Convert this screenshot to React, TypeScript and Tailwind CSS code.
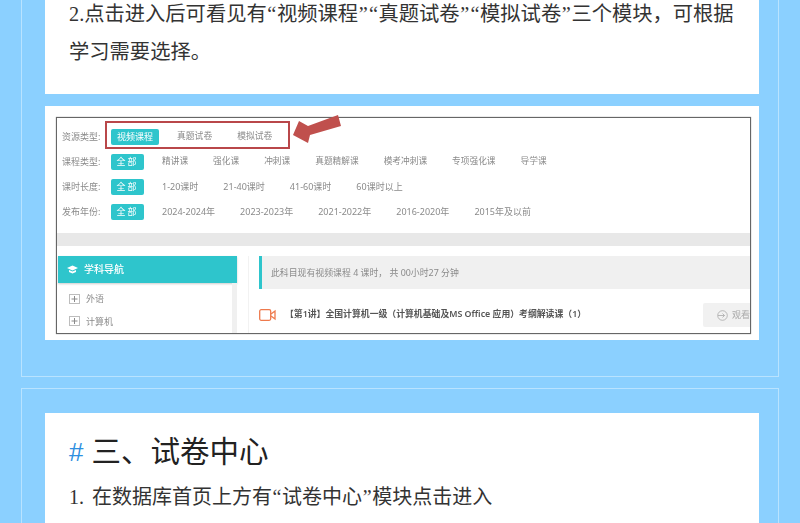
const cjk = "font-['Liberation_Serif','Noto_Sans_CJK_SC',serif]";

function Row({ label, active, items, cls, size }: { label: string; active: string; items: string[]; cls: string; size: string }) {
  return (
    <div className={`flex items-center ${cls}`}>
      <span className="w-[54px] shrink-0 pl-[5px] text-[9px] text-[#8a8a8a]">{label}</span>
      <span className="flex h-[16px] w-[33px] shrink-0 items-center justify-center rounded-[2px] bg-[#2ec5cc] text-[9px] tracking-[2px] text-white">{active}</span>
      <div className="ml-[18px] flex gap-[25px]">
        {items.map((t) => (
          <span key={t} className={`whitespace-nowrap text-[#8a8a8a] ${size}`}>{t}</span>
        ))}
      </div>
    </div>
  );
}

function Plus() {
  return (
    <svg width="11" height="10" viewBox="0 0 11 10" className="shrink-0">
      <rect x="0.5" y="0.5" width="10" height="9" fill="#fff" stroke="#bdbdbd" />
      <path d="M2.5 5H8.5M5.5 2V8" stroke="#8a8a8a" strokeWidth="1" />
    </svg>
  );
}

function Shot() {
  return (
    <div className="relative h-[217px] w-[695px] border border-[#666] bg-white font-['Noto_Sans','Noto_Sans_CJK_SC',sans-serif] shadow-[0_0_1px_#888]">
      <div className="h-full overflow-hidden blur-[0.45px]">
        <div className="flex h-[36px] items-center pt-[1px]">
          <span className="w-[54px] shrink-0 pl-[5px] text-[9px] text-[#8a8a8a]">资源类型:</span>
          <span className="flex h-[16px] w-[48px] shrink-0 items-center justify-center rounded-[2px] bg-[#2ec5cc] text-[9px] text-white">视频课程</span>
          <div className="ml-[18px] flex gap-[25px]">
            <span className="text-[8.8px] text-[#8a8a8a]">真题试卷</span>
            <span className="text-[8.8px] text-[#8a8a8a]">模拟试卷</span>
          </div>
        </div>
        <Row cls="h-[16px]" size="text-[8.7px]" label="课程类型:" active="全部" items={["精讲课", "强化课", "冲刺课", "真题精解课", "模考冲刺课", "专项强化课", "导学课"]} />
        <Row cls="mt-[9px] h-[16px]" size="text-[9px]" label="课时长度:" active="全部" items={["1-20课时", "21-40课时", "41-60课时", "60课时以上"]} />
        <Row cls="mt-[9px] h-[16px]" size="text-[9px]" label="发布年份:" active="全部" items={["2024-2024年", "2023-2023年", "2021-2022年", "2016-2020年", "2015年及以前"]} />
        <div className="mt-[13px] h-[13px] bg-[#e8e8e8]" />
        <div className="mt-[10px] flex">
          <div className="ml-[1px] w-[179px] shrink-0">
            <div className="flex h-[27px] items-center bg-[#2ec5cc] pl-[9px] text-[10px] font-medium text-white shadow-[0_1px_2px_#ccc]">
              <svg width="11" height="9" viewBox="0 0 11 9" className="mr-[6px]">
                <path d="M5.5 0.5L11 3L5.5 5.5L0 3Z" fill="#fff" />
                <path d="M2 5L5.5 6.6L9 5V7L5.5 8.6L2 7Z" fill="#fff" />
              </svg>
              学科导航
            </div>
            <div className="h-[60px] border-r-[5px] border-r-[#f0f0f0] pl-[11px] pt-[9px]">
              <div className="flex items-center gap-[6px] text-[9px] text-[#8a8a8a]"><Plus />外语</div>
              <div className="mt-[9px] flex items-center gap-[6px] text-[9px] text-[#8a8a8a]"><Plus />计算机</div>
            </div>
          </div>
          <div className="ml-[11px] min-w-0 flex-1 border-l border-l-[#f2f2f2] pl-[10px]">
            <div className="flex h-[33px] items-center border-l-[3px] border-l-[#2ec5cc] bg-[#f0f0f0] pl-[9px] text-[8.9px] whitespace-nowrap text-[#8a8a8a]">
              此科目现有视频课程 4 课时， 共 00小时27 分钟
            </div>
            <div className="mt-[14px] flex h-[24px] items-center">
              <svg width="17" height="12" viewBox="0 0 17 12" fill="none" stroke="#ee7a4d" strokeWidth="1.3" className="shrink-0">
                <rect x="0.7" y="0.7" width="11" height="10.6" rx="1.5" />
                <path d="M12 5L16 2V10L12 7" />
              </svg>
              <span className="ml-[9px] w-[418px] shrink-0 text-[8.85px] font-semibold whitespace-nowrap text-[#555]">【第1讲】全国计算机一级（计算机基础及MS Office 应用）考纲解读课（1）</span>
              <span className="flex h-[24px] w-[60px] shrink-0 items-center rounded-[2px] bg-[#f1f1f1] pl-[14px] text-[9px] text-[#aaa]">
                <svg width="11" height="11" viewBox="0 0 11 11" fill="none" stroke="#aaa" strokeWidth="0.8" className="mr-[4px] shrink-0">
                  <circle cx="5.5" cy="5.5" r="4.8" />
                  <path d="M1 5.5H7.5M5.5 3.5L7.5 5.5L5.5 7.5" />
                </svg>
                观看
              </span>
            </div>
          </div>
        </div>
      </div>
      <div className="absolute left-[48px] top-[3px] h-[28px] w-[185px] border-2 border-[#b9474a]" />
      <svg width="54" height="32" viewBox="0 0 54 32" className="absolute left-[233px] top-[-5px]">
        <path d="M3 22L9 8L18 13L48 2L51 13L20 22L18 30Z" fill="#c0504d" />
      </svg>
    </div>
  );
}

function Q({ c }: { c: string }) {
  return <span className="mx-[0.6px]">{c}</span>;
}

export default function App() {
  return (
    <div className={`h-[523px] w-[800px] overflow-hidden bg-[#8bd0ff] px-[21px] ${cjk}`}>
      <div className="h-[377px] border-x border-b border-[#b9e3ff] px-[23px]">
        <div className="h-[94px] w-[714px] bg-white pl-[24px]">
          <p className="-translate-y-[5px] text-[20.3px] leading-[38px] whitespace-nowrap text-[#333]">
            2.点击进入后可看见有<Q c="“" />视频课程<Q c="”" /><Q c="“" />真题试卷<Q c="”" /><Q c="“" />模拟试卷<Q c="”" />三个模块，可根据<br />学习需要选择。
          </p>
        </div>
        <div className="mt-[12px] h-[234px] w-[714px] bg-white pl-[11px] pt-[11px]">
          <Shot />
        </div>
      </div>
      <div className="mt-[11px] h-[200px] border-x border-t border-[#b9e3ff] px-[23px] pt-[24px]">
        <div className="h-[200px] w-[714px] bg-white pl-[24px] pt-[18px]">
          <h2 className="flex h-[42px] items-center whitespace-nowrap text-[29.5px] font-normal text-[#222]">
            <span className="mr-[8px] font-['Liberation_Sans',sans-serif] text-[26px] text-[#2e8fe0]">#</span>
            三、试卷中心
          </h2>
          <p className="mt-[5px] text-[20px] leading-[38px] whitespace-nowrap text-[#333]">
            <span className="inline-block w-[23px]">1.</span>在数据库首页上方有<Q c="“" />试卷中心<Q c="”" />模块点击进入
          </p>
        </div>
      </div>
    </div>
  );
}
